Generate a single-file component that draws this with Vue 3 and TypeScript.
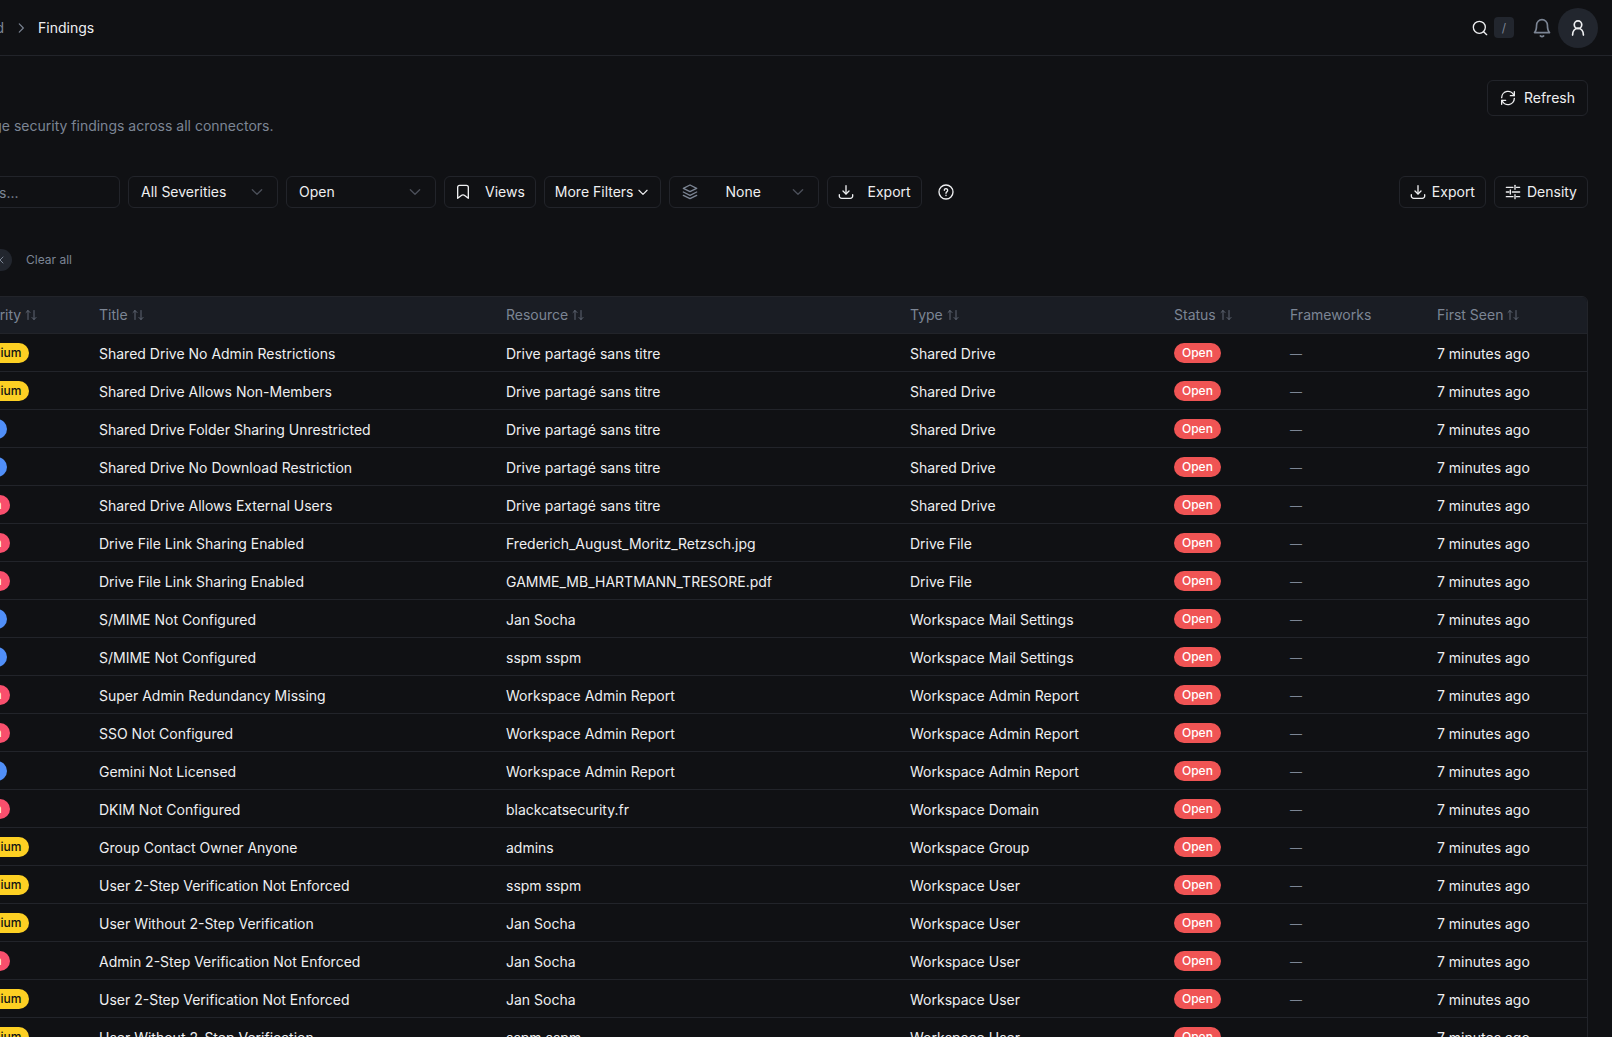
<script setup lang="ts">
import { h, type FunctionalComponent } from 'vue'

type Severity = 'Medium' | 'Low' | 'High'

interface Finding {
  severity: Severity
  title: string
  resource: string
  type: string
}

interface Column {
  label: string
  key: string
  sortable: boolean
}

const icons: Record<string, string[]> = {
  chevronRight: ['M9 5l7 7-7 7'],
  chevronDown: ['M5 9l7 7 7-7'],
  selectArrow: ['M5 8.500l7 7 7-7'],
  search: ['M17.500 17.500L22 22', 'M20 11a9 9 0 1 0-18 0a9 9 0 0 0 18 0z'],
  bell: [
    'M3 17.500c2-2 2.500-4 2.500-9a6.500 6.500 0 0 1 13 0c0 5 .500 7 2.500 9z',
    'M10 21.500a2.500 1.500 0 0 0 4 0',
  ],
  user: ['M16.500 8a4.500 4.500 0 1 0-9 0a4.500 4.500 0 0 0 9 0z', 'M18.500 20.500c0-4.500-2.500-8-6.500-8s-6.500 3.500-6.500 8'],
  refresh: [
    'M21.500 2.500v6h-6',
    'M2.500 21.500v-6h6',
    'M2.500 11.500A9.500 9.500 0 0 1 21 8.500',
    'M21.500 12.500A9.500 9.500 0 0 1 3 15.500',
  ],
  bookmark: ['M4 21.500V5a3 3 0 0 1 3-3h10a3 3 0 0 1 3 3v16.500l-5-4a5 5 0 0 0-6 0z'],
  layers: [
    'M12 1.500L22 6.500L12 11.500L2 6.500z',
    'M22 12L12 17L2 12',
    'M22 17L12 22L2 17',
  ],
  download: ['M12 14.500V2.500', 'M7.500 10.500L12 15l4.500-4.500', 'M2 16v2a3.500 3.500 0 0 0 3.500 3.500h13a3.500 3.500 0 0 0 3.500-3.500v-2'],
  help: ['M22.500 12a10.500 10.500 0 1 0-21 0a10.500 10.500 0 0 0 21 0z', 'M9.500 9.500a2.500 2.500 0 1 1 4 2c-1 .700-1.500 1.200-1.500 2.500', 'M12 16.800v.400'],
  sliders: ['M2 5h10', 'M17 5h5', 'M15 2v6', 'M2 12h4', 'M11 12h11', 'M8 9v6', 'M2 19h10', 'M17 19h5', 'M15 16v6'],
  sort: ['M6 21V3', 'M2 7l4-4 4 4', 'M18 3v18', 'M14 17l4 4 4-4'],
  close: ['M18 6L6 18', 'M6 6l12 12'],
}

const Icon: FunctionalComponent<{ name: string; size?: number; weight?: number }> = (props) =>
  h(
    'svg',
    {
      width: props.size ?? 16,
      height: props.size ?? 16,
      viewBox: '0 0 24 24',
      fill: 'none',
      stroke: 'currentColor',
      'stroke-width': props.weight ?? 2,
      'stroke-linecap': 'round',
      'stroke-linejoin': 'round',
      'aria-hidden': 'true',
    },
    icons[props.name].map((d) => h('path', { d })),
  )
Icon.props = ['name', 'size', 'weight']

const columns: Column[] = [
  { label: 'Severity', key: 'severity', sortable: true },
  { label: 'Title', key: 'title', sortable: true },
  { label: 'Resource', key: 'resource', sortable: true },
  { label: 'Type', key: 'type', sortable: true },
  { label: 'Status', key: 'status', sortable: true },
  { label: 'Frameworks', key: 'frameworks', sortable: false },
  { label: 'First Seen', key: 'seen', sortable: true },
]

const rows: [Severity, string, string, string][] = [
  ['Medium', 'Shared Drive No Admin Restrictions', 'Drive partagé sans titre', 'Shared Drive'],
  ['Medium', 'Shared Drive Allows Non-Members', 'Drive partagé sans titre', 'Shared Drive'],
  ['Low', 'Shared Drive Folder Sharing Unrestricted', 'Drive partagé sans titre', 'Shared Drive'],
  ['Low', 'Shared Drive No Download Restriction', 'Drive partagé sans titre', 'Shared Drive'],
  ['High', 'Shared Drive Allows External Users', 'Drive partagé sans titre', 'Shared Drive'],
  ['High', 'Drive File Link Sharing Enabled', 'Frederich_August_Moritz_Retzsch.jpg', 'Drive File'],
  ['High', 'Drive File Link Sharing Enabled', 'GAMME_MB_HARTMANN_TRESORE.pdf', 'Drive File'],
  ['Low', 'S/MIME Not Configured', 'Jan Socha', 'Workspace Mail Settings'],
  ['Low', 'S/MIME Not Configured', 'sspm sspm', 'Workspace Mail Settings'],
  ['High', 'Super Admin Redundancy Missing', 'Workspace Admin Report', 'Workspace Admin Report'],
  ['High', 'SSO Not Configured', 'Workspace Admin Report', 'Workspace Admin Report'],
  ['Low', 'Gemini Not Licensed', 'Workspace Admin Report', 'Workspace Admin Report'],
  ['High', 'DKIM Not Configured', 'blackcatsecurity.fr', 'Workspace Domain'],
  ['Medium', 'Group Contact Owner Anyone', 'admins', 'Workspace Group'],
  ['Medium', 'User 2-Step Verification Not Enforced', 'sspm sspm', 'Workspace User'],
  ['Medium', 'User Without 2-Step Verification', 'Jan Socha', 'Workspace User'],
  ['High', 'Admin 2-Step Verification Not Enforced', 'Jan Socha', 'Workspace User'],
  ['Medium', 'User 2-Step Verification Not Enforced', 'Jan Socha', 'Workspace User'],
  ['Medium', 'User Without 2-Step Verification', 'sspm sspm', 'Workspace User'],
]

const findings: Finding[] = rows.map(([severity, title, resource, type]) => ({ severity, title, resource, type }))
</script>

<template>
  <div class="viewport">
    <div class="shell">
      <header class="topbar">
        <nav class="crumbs" aria-label="Breadcrumb">
          <a class="crumb-link" href="#">Dashboard</a>
          <Icon name="chevronRight" :size="14" />
          <span class="crumb-current">Findings</span>
        </nav>
        <div class="top-actions">
          <button class="search-button" type="button" aria-label="Search">
            <Icon name="search" />
            <kbd>/</kbd>
          </button>
          <button class="bell-button" type="button" aria-label="Notifications"><Icon name="bell" :size="20" /></button>
          <button class="avatar" type="button" aria-label="Account"><Icon name="user" :size="20" /></button>
        </div>
      </header>

      <main class="content">
        <div class="intro">
          <p>View and manage security findings across all connectors.</p>
          <button class="btn btn-large" type="button"><Icon name="refresh" />Refresh</button>
        </div>

        <div class="toolbar">
          <input class="search-input" type="text" placeholder="Search findings..." aria-label="Search findings" />
          <label class="picker">
            <select aria-label="Severity"><option>All Severities</option></select>
            <Icon name="selectArrow" />
          </label>
          <label class="picker">
            <select aria-label="Status"><option>Open</option></select>
            <Icon name="selectArrow" />
          </label>
          <button class="btn spaced" type="button"><Icon name="bookmark" />Views</button>
          <button class="btn tight" type="button">More Filters<Icon name="chevronDown" :size="14" /></button>
          <label class="picker grouping">
            <Icon name="layers" />
            <select aria-label="Group by"><option>None</option></select>
            <Icon name="selectArrow" />
          </label>
          <button class="btn spaced" type="button"><Icon name="download" />Export</button>
          <button class="help" type="button" aria-label="Help"><Icon name="help" /></button>
          <div class="toolbar-end">
            <button class="btn" type="button"><Icon name="download" />Export</button>
            <button class="btn" type="button"><Icon name="sliders" />Density</button>
          </div>
        </div>

        <div class="active-filters">
          <button class="chip" type="button" aria-label="Remove filter"><Icon name="close" :size="12" /></button>
          <button class="clear" type="button">Clear all</button>
        </div>

        <div class="table-frame">
          <table>
            <colgroup>
              <col v-for="column in columns" :key="column.key" :class="'col-' + column.key" />
            </colgroup>
            <thead>
              <tr>
                <th v-for="column in columns" :key="column.key" scope="col">
                  <button v-if="column.sortable" class="sort" type="button">
                    {{ column.label }}<Icon name="sort" :size="12" />
                  </button>
                  <template v-else>{{ column.label }}</template>
                </th>
              </tr>
            </thead>
            <tbody>
              <tr v-for="(finding, index) in findings" :key="index">
                <td class="badge-cell">
                  <span class="badge" :class="finding.severity.toLowerCase()">{{ finding.severity }}</span>
                </td>
                <td>{{ finding.title }}</td>
                <td>{{ finding.resource }}</td>
                <td>{{ finding.type }}</td>
                <td class="badge-cell"><span class="badge open">Open</span></td>
                <td class="muted">—</td>
                <td>7 minutes ago</td>
              </tr>
            </tbody>
          </table>
        </div>
      </main>
    </div>
  </div>
</template>

<style>
body {
  margin: 0;
  background: #101114;
}
</style>

<style scoped>
.viewport {
  height: 100vh;
  overflow: hidden;
  background: #101114;
  color: #eeeff1;
  font: 14px/20px Inter, 'Noto Sans', sans-serif;
}

.shell {
  margin-left: -132px;
}

*,
*::before {
  box-sizing: border-box;
}

button,
input,
select {
  margin: 0;
  padding: 0;
  border: 0;
  background: none;
  color: inherit;
  font: inherit;
}

svg {
  display: block;
  flex: none;
}

.topbar {
  display: flex;
  align-items: center;
  justify-content: space-between;
  height: 56px;
  padding: 0 14px 0 24px;
  border-bottom: 1px solid #22242a;
}

.crumbs {
  display: flex;
  align-items: center;
  gap: 10px;
  color: #7c8594;
}

.crumb-link {
  width: 112px;
  color: #7c8594;
  text-align: right;
  text-decoration: none;
}

.crumb-current {
  color: #eeeff1;
}

.top-actions {
  display: flex;
  align-items: center;
}

.search-button {
  display: flex;
  align-items: center;
  gap: 6px;
  margin-right: 18px;
}

kbd {
  width: 20px;
  height: 21px;
  border-radius: 4px;
  background: #22262e;
  color: #7c8594;
  font: 12px/21px Inter, sans-serif;
  text-align: center;
}

.bell-button {
  margin-right: 6px;
  color: #7c8594;
}

.avatar {
  display: grid;
  place-items: center;
  width: 40px;
  height: 40px;
  border-radius: 50%;
  background: #22262e;
}

.content {
  padding: 24px 24px 0;
}

.intro {
  display: flex;
  align-items: flex-start;
  justify-content: space-between;
}

.intro p {
  margin: 36px 0 0;
  color: #7c8594;
}

.btn {
  display: flex;
  align-items: center;
  gap: 6px;
  height: 32px;
  padding: 0 10px;
  border: 1px solid #22242a;
  border-radius: 6px;
  white-space: nowrap;
}

.btn-large {
  gap: 8px;
  height: 36px;
  padding: 0 12px;
}

.spaced {
  gap: 14px;
}

.tight {
  gap: 2px;
}

.toolbar {
  display: flex;
  align-items: center;
  gap: 8px;
  margin-top: 40px;
}

.search-input {
  width: 228px;
  height: 32px;
  padding: 0 10px;
  border: 1px solid #22242a;
  border-radius: 6px;
}

.search-input::placeholder {
  color: #7c8594;
  opacity: 1;
}

.picker {
  display: flex;
  align-items: center;
  justify-content: space-between;
  width: 150px;
  height: 32px;
  padding: 0 12px;
  border: 1px solid #22242a;
  border-radius: 6px;
}

.picker select {
  appearance: none;
}

.picker svg:last-child {
  color: #4b4f59;
}

.grouping svg:first-child {
  color: #7c8594;
}

.help {
  display: grid;
  place-items: center;
  width: 32px;
  height: 32px;
}

.toolbar-end {
  display: flex;
  gap: 8px;
  margin-left: auto;
}

.active-filters {
  display: flex;
  align-items: center;
  gap: 14px;
  margin-top: 41px;
}

.chip {
  display: flex;
  align-items: center;
  justify-content: flex-end;
  width: 120px;
  height: 22px;
  padding: 0 6px;
  border-radius: 11px;
  background: #22262e;
  color: #7c8594;
}

.clear {
  color: #7c8594;
  font-size: 12px;
}

.table-frame {
  margin-top: 25px;
  border: 1px solid #22242a;
  border-radius: 6px;
  overflow: hidden;
}

table {
  width: 100%;
  table-layout: fixed;
  border-collapse: separate;
  border-spacing: 0;
}

.col-severity {
  width: 194px;
}

.col-resource {
  width: 404px;
}

.col-type {
  width: 264px;
}

.col-status {
  width: 116px;
}

.col-frameworks {
  width: 147px;
}

.col-seen {
  width: 162px;
}

th,
td {
  height: 38px;
  padding: 2px 12px 0;
  border-bottom: 1px solid #22242a;
  text-align: left;
  white-space: nowrap;
}

th {
  height: 37px;
  padding-top: 0;
  background: #1a1d24;
  color: #7c8594;
  font-weight: 400;
}

th:first-child,
td:first-child {
  padding-left: 74px;
}

td.badge-cell {
  padding-top: 0;
}

.sort {
  display: flex;
  align-items: center;
  gap: 4px;
}

.sort svg {
  opacity: 0.7;
}

td.muted {
  color: #7c8594;
  font-size: 12px;
}

.badge {
  display: block;
  width: fit-content;
  height: 20px;
  padding: 0 8px;
  border-radius: 10px;
  font-size: 12px;
  font-weight: 500;
  line-height: 20px;
}

.open {
  background: #f05454;
  color: #ffffff;
}

.medium {
  background: #fdd023;
  color: #101114;
}

.low {
  background: #508ff8;
  color: #ffffff;
}

.high {
  background: #f94f6d;
  color: #ffffff;
}
</style>
